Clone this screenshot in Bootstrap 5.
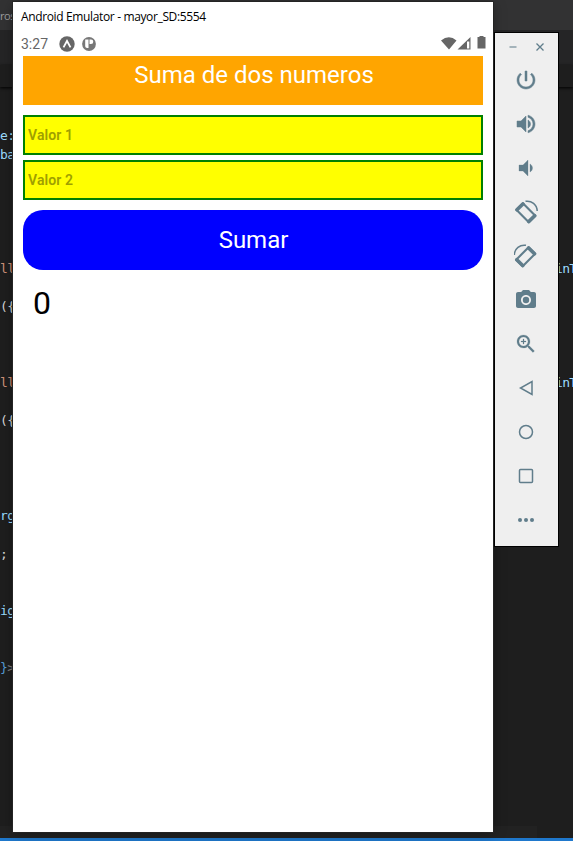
<!DOCTYPE html>
<html lang="es">
<head>
<meta charset="utf-8">
<meta name="viewport" content="width=device-width, initial-scale=1">
<title>Android Emulator - mayor_SD:5554</title>
<link rel="stylesheet" href="https://cdn.jsdelivr.net/npm/bootstrap@5.3.0/dist/css/bootstrap.min.css">
<style>
body{background:#1e1e1e;height:841px;font-family:Roboto,sans-serif}
.editor{height:841px;color:#d4d4d4}
.titlebar{height:30px;background:#323233}
.tabname{font:11px/30px "Open Sans",sans-serif;color:#a0a0a0;padding-top:1px;letter-spacing:-.4px}
.tabs{height:35px;background:#252526}
.crumbs{height:22px;background:#1e1e1e;box-shadow:0 1px 3px #000}
.code{font:13px/19px "DejaVu Sans Mono",monospace;letter-spacing:-.7px;padding-top:39px;white-space:pre}
.code-right{position:absolute;left:555px;top:0;padding-top:259px}
.k{color:#9cdcfe}.s{color:#ce9178}.b{color:#569cd6}.g{color:#808080}
.bottomline{height:3px;background:#1f78cc}
.bottomrow{height:12px;width:537px;background:#222}
.phone{position:absolute;left:13px;top:2px;width:480px;height:830px;box-shadow:0 2px 12px 0 rgba(0,0,0,.35),0 0 0 1px #2a2a2a}
.wintitle{height:31px;padding:0 8px;font:12px/30px "Open Sans",sans-serif;color:#000;letter-spacing:-.36px}
.status{height:23px;padding:2px 7px 0 8px;color:#666;font-size:14px;line-height:18px}
.app{padding:0 10px}
.heading{height:49px;background:orange;color:#fff;font-size:24px;line-height:28px;padding:5px 0 0 2px}
.field{height:40px;background:#ff0;border:2px solid green;border-radius:0;color:#9a9a00;font-size:14px;font-weight:600;letter-spacing:.1px;padding:0 3px;margin-top:10px}
.field::placeholder{color:#9f9f00;opacity:1}
.field:focus{background:#ff0;box-shadow:none}
.field + .field{margin:5px 0 10px}
.sum{height:60px;background:#00f;border:0;border-radius:20px;color:#fff;font-size:24px;padding:0 0 0 1px}
.result{font-size:32px;line-height:38px;color:#000;padding-left:10px;margin-top:14px}
.tools{position:absolute;left:494px;top:32px;width:65px;height:515px;background:#efefef;border:1px solid #000;color:#607d8b}
.tools button{height:44px;width:62px;padding:0;border:0;background:none;color:inherit}
.winctl{height:25px}
svg{display:block;fill:currentColor}
</style>
<script src="https://cdn.jsdelivr.net/npm/bootstrap@5.3.0/dist/js/bootstrap.bundle.min.js"></script>
</head>
<body class="m-0 overflow-hidden position-relative">
<div class="editor d-flex flex-column overflow-hidden">
  <div class="titlebar flex-shrink-0"><div class="tabname">ros</div></div>
  <div class="tabs flex-shrink-0"></div>
  <div class="crumbs flex-shrink-0"></div>
  <div class="code flex-grow-1 overflow-hidden"><span class="k">e:</span>
<span class="k">ba</span>





<span class="s">ll</span>

({



<span class="s">ll</span>

({




<span class="k">rg</span>

;


<span class="k">ig</span>


<span class="b">}</span><span class="g">&gt;</span></div>
  <div class="bottomrow flex-shrink-0"></div>
  <div class="bottomline flex-shrink-0"></div>
</div>
<div class="code code-right"><span class="k">inT</span>





<span class="k">inT</span></div>

<main class="phone bg-white">
  <div class="wintitle">Android Emulator - mayor_SD:5554</div>
  <div class="status d-flex justify-content-between">
    <div class="d-flex">
      <span>3:27</span>
      <svg class="ms-2" width="48" height="20" viewBox="0 0 48 20"><circle cx="11" cy="9" r="7.700"/><path d="M7.500 12.400L11 6l3.500 6.400" fill="none" stroke="#fff" stroke-width="1.800"/><circle cx="33" cy="9" r="6.900" fill="#777"/><path d="M29.200 4.500h3.300v8.500h-1.300c-1.200 0-2-.8-2-2zM33.500 4.500h1.500a2.300 2.300 0 0 1 0 4.600h-1.500z" fill="#fff"/></svg>
    </div>
    <svg width="45" height="20" viewBox="0 0 45 20"><path d="M0 5.500Q8-1 15.500 5.500L8 14.500zM29.500 2v12.500H16.500z"/><path d="M26 6.500h2.300v7H26z" fill="#fff"/><path d="M36.500 2h2V1h4v1h2v11.500h-8z"/></svg>
  </div>
  <div class="app">
    <div class="heading text-center">Suma de dos numeros</div>
    <input class="field form-control" aria-label="Valor 1" placeholder="Valor 1">
    <input class="field form-control" aria-label="Valor 2" placeholder="Valor 2">
    <button class="sum btn w-100 d-flex align-items-center justify-content-center">Sumar</button>
    <div class="result">0</div>
  </div>
</main>

<aside class="tools d-flex flex-column">
  <div class="winctl"><svg width="63" height="25"><path d="M14.500 13.200h7v1.600h-7z" opacity=".65"/><path d="M41.500 10.500l7 7m0-7l-7 7" stroke="currentColor" stroke-width="1.300"/></svg></div>
  <button class="d-flex align-items-center justify-content-center" aria-label="Power"><svg width="24" height="24" viewBox="0 0 24 24"><path d="M13 3h-2v10h2V3zm4.830 2.170l-1.420 1.420C17.990 7.860 19 9.810 19 12c0 3.870-3.130 7-7 7s-7-3.130-7-7c0-2.190 1.010-4.140 2.580-5.420L6.170 5.170C4.230 6.820 3 9.260 3 12c0 4.970 4.030 9 9 9s9-4.030 9-9c0-2.740-1.230-5.180-3.170-6.830z" stroke="currentColor" stroke-width=".5"/></svg></button>
  <button class="d-flex align-items-center justify-content-center" aria-label="Volume up"><svg width="24" height="24" viewBox="0 0 24 24"><path d="M3 9v6h4l5 5V4L7 9H3zm13.500 3c0-1.770-1.020-3.290-2.500-4.030v8.050c1.480-.73 2.500-2.250 2.500-4.020zM14 3.230v2.060c2.890.86 5 3.540 5 6.710s-2.110 5.850-5 6.710v2.060c4.010-.91 7-4.490 7-8.770s-2.990-7.860-7-8.770z" stroke="currentColor" stroke-width=".5"/></svg></button>
  <button class="d-flex align-items-center justify-content-center" aria-label="Volume down"><svg width="24" height="24" viewBox="0 0 24 24"><path d="M18.500 12c0-1.770-1.020-3.290-2.500-4.030v8.050c1.480-.73 2.500-2.250 2.500-4.020zM5 9v6h4l5 5V4L9 9H5z" stroke="currentColor" stroke-width=".3"/></svg></button>
  <button class="d-flex align-items-center justify-content-center" aria-label="Rotate left"><svg width="24" height="24" viewBox="0 0 24 24"><g fill="none" stroke="currentColor"><path d="M8.900 3.300L2.400 9.800 14.800 22.200 21.300 15.700z" stroke-width="2.100" stroke-linejoin="round"/><path d="M8.900 3.900L3 9.800M20.700 15.700L14.800 21.600" stroke-width="3.600" stroke-linecap="round"/><path d="M11.500 1.300C17.500.3 23 4.500 23.200 11" stroke-width="1.500"/></g></svg></button>
  <button class="d-flex align-items-center justify-content-center" aria-label="Rotate right"><svg width="24" height="24" viewBox="0 0 24 24"><g transform="matrix(-1 0 0 1 23.500 0)" fill="none" stroke="currentColor"><path d="M8.900 3.300L2.400 9.800 14.800 22.200 21.300 15.700z" stroke-width="2.100" stroke-linejoin="round"/><path d="M8.900 3.900L3 9.800M20.700 15.700L14.800 21.600" stroke-width="3.600" stroke-linecap="round"/><path d="M11.500 1.300C17.500.3 23 4.500 23.200 11" stroke-width="1.500"/></g></svg></button>
  <button class="d-flex align-items-center justify-content-center" aria-label="Screenshot"><svg width="24" height="24" viewBox="0 0 24 24"><circle cx="12" cy="12" r="3.200"/><path d="M9 2L7.170 4H4c-1.100 0-2 .9-2 2v12c0 1.100.9 2 2 2h16c1.100 0 2-.9 2-2V6c0-1.100-.9-2-2-2h-3.170L15 2H9zm3 15c-2.760 0-5-2.240-5-5s2.240-5 5-5 5 2.240 5 5-2.240 5-5 5z"/></svg></button>
  <button class="d-flex align-items-center justify-content-center" aria-label="Zoom"><svg width="24" height="24" viewBox="0 0 24 24"><path d="M15.500 14h-.79l-.28-.27C15.410 12.590 16 11.110 16 9.500 16 5.910 13.090 3 9.500 3S3 5.910 3 9.500 5.910 16 9.500 16c1.610 0 3.090-.59 4.230-1.570l.27.28v.79l5 4.990L20.490 19l-4.990-5zm-6 0C7.010 14 5 11.990 5 9.500S7.010 5 9.500 5 14 7.010 14 9.500 11.990 14 9.500 14zm2.500-4h-2v2H9v-2H7V9h2V7h1v2h2v1z" stroke="currentColor" stroke-width=".2"/></svg></button>
  <button class="d-flex align-items-center justify-content-center" aria-label="Back"><svg width="24" height="24" viewBox="0 0 24 24"><path d="M18 5.500v13L6.500 12z" fill="none" stroke="currentColor" stroke-width="1.500"/></svg></button>
  <button class="d-flex align-items-center justify-content-center" aria-label="Home"><svg width="24" height="24" viewBox="0 0 24 24"><circle cx="12" cy="12" r="6.500" fill="none" stroke="currentColor" stroke-width="1.500"/></svg></button>
  <button class="d-flex align-items-center justify-content-center" aria-label="Overview"><svg width="24" height="24" viewBox="0 0 24 24"><rect x="5.500" y="5.500" width="13" height="13" rx="1" fill="none" stroke="currentColor" stroke-width="1.500"/></svg></button>
  <button class="d-flex align-items-center justify-content-center" aria-label="More"><svg width="24" height="24" viewBox="0 0 24 24"><circle cx="6" cy="12" r="2"/><circle cx="12" cy="12" r="2"/><circle cx="18" cy="12" r="2"/></svg></button>
</aside>
</body>
</html>
